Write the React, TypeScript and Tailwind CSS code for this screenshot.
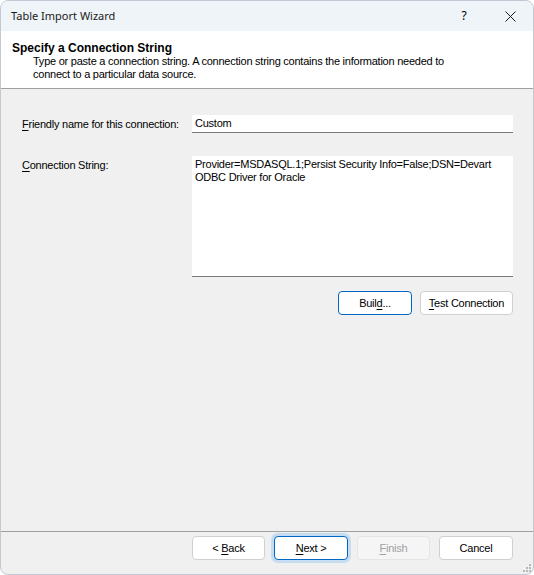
import React from "react";

const U = ({ children }: { children: React.ReactNode }) => (
  <span className="underline underline-offset-2">{children}</span>
);

function Btn({
  children,
  w,
  variant = "normal",
}: {
  children: React.ReactNode;
  w: string;
  variant?: "normal" | "focus" | "default" | "disabled";
}) {
  const base =
    "h-[24px] rounded-[4px] border flex items-center justify-center text-[11px] leading-none shrink-0 ";
  let cls = "";
  if (variant === "normal") cls = "bg-white border-[#d0d0d0] text-black";
  if (variant === "focus") cls = "bg-white border-[#0067c0] text-black";
  if (variant === "default")
    cls = "bg-white border-[#0067c0] text-black shadow-[0_0_0_3px_#c6dcf0]";
  if (variant === "disabled") cls = "bg-[#f5f5f5] border-[#e5e5e5] text-[#a0a0a0]";
  return (
    <div className={base + cls + " " + w}>
      <span>{children}</span>
    </div>
  );
}

export default function App() {
  return (
    <div className="w-[534px] h-[575px] bg-[#f0f0f0] border border-[#c3c8d4] rounded-[8px] overflow-hidden flex flex-col font-['Liberation_Sans',Arial,sans-serif] text-[11px] tracking-[-0.24px] text-black relative">
      {/* title bar */}
      <div className="h-[30px] bg-[#eef4f7] flex items-center shrink-0 tracking-normal">
        <div className="pl-[10px] font-['Noto_Sans',sans-serif] text-[11px] text-[#1a1a1a] flex-1">
          Table Import Wizard
        </div>
        <div className="w-[46px] flex justify-center font-['Noto_Sans',sans-serif] text-[12px]">?</div>
        <div className="w-[46px] flex justify-center">
          <svg width="11" height="11" viewBox="0 0 11 11">
            <path d="M0.5 0.5 L10.5 10.5 M10.5 0.5 L0.5 10.5" stroke="#1a1a1a" strokeWidth="1" />
          </svg>
        </div>
      </div>
      {/* header */}
      <div className="h-[58px] bg-white border-b border-[#a0a0a0] shrink-0 pl-[11px] pt-[10px] leading-[13px]">
        <div className="font-bold text-[12px] tracking-normal leading-[14px]">Specify a Connection String</div>
        <div className="pl-[21px]">
          Type or paste a connection string. A connection string contains the information needed to
          <br />
          connect to a particular data source.
        </div>
      </div>
      {/* body */}
      <div className="flex-1 flex flex-col pl-[21px] pr-[20px] pt-[26px]">
        <div className="flex items-center">
          <div className="w-[170px]">
            <U>F</U>riendly name for this connection:
          </div>
          <div className="flex-1 h-[18px] bg-white border-b border-[#7a7a7a] flex items-center pl-[3px]">
            Custom
          </div>
        </div>
        <div className="flex mt-[23px]">
          <div className="w-[170px] pt-[1px]">
            <U>C</U>onnection String:
          </div>
          <div className="flex-1 h-[121px] bg-white border-b border-[#7a7a7a] pl-[3px] pt-[2px] leading-[13px]">
            Provider=MSDASQL.1;Persist Security Info=False;DSN=Devart
            <br />
            ODBC Driver for Oracle
          </div>
        </div>
        <div className="flex justify-end gap-[8px] mt-[14px]">
          <Btn w="w-[74px]" variant="focus">
            Buil<U>d</U>...
          </Btn>
          <Btn w="w-[93px]">
            <U>T</U>est Connection
          </Btn>
        </div>
      </div>
      {/* footer */}
      <div className="h-[43px] border-t border-[#a0a0a0] shrink-0 flex justify-end items-start pt-[4px] pr-[20px] gap-[9px]">
        <Btn w="w-[73px]">
          &lt; <U>B</U>ack
        </Btn>
        <Btn w="w-[74px]" variant="default">
          <U>N</U>ext &gt;
        </Btn>
        <Btn w="w-[73px]" variant="disabled">
          <U>F</U>inish
        </Btn>
        <Btn w="w-[74px]">Cancel</Btn>
      </div>
      {/* resize grip */}
      <svg className="absolute right-[2px] bottom-[2px]" width="10" height="10" viewBox="0 0 10 10">
        {[
          [8, 0],
          [8, 3],
          [5, 3],
          [8, 6],
          [5, 6],
          [2, 6],
        ].map(([x, y], i) => (
          <rect key={i} x={x} y={y + 2} width="2" height="2" fill="#b8b8b8" />
        ))}
      </svg>
    </div>
  );
}
